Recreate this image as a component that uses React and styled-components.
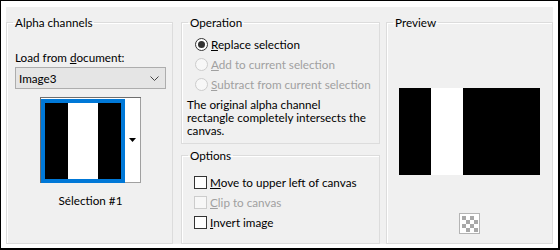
import React from "react";
import styled, { createGlobalStyle } from "styled-components";

const Global = createGlobalStyle`
  html, body { margin: 0; padding: 0; background: #ffffff; }
  body { font-family: "Segoe UI", Lato, "Liberation Sans", sans-serif; font-size: 11.7px; color: #000; }
  * { box-sizing: border-box; }
`;

const Frame = styled.div`
  width: 560px;
  height: 250px;
  border-style: solid;
  border-color: #000;
  border-width: 1px 2px 2px 1px;
  padding: 6px 5px 4px 5px;
  background: #fff;
`;

const Panel = styled.div`
  height: 100%;
  background: #f0f0f0;
  padding-top: 7px;
  display: flex;
`;

const Column = styled.div`
  width: ${(p) => p.$w}px;
  flex: none;
  display: flex;
  flex-direction: column;
  gap: 3px;
  margin-left: ${(p) => p.$ml || 0}px;
`;

const Group = styled.fieldset`
  margin: 0;
  padding: 0;
  min-width: 0;
  border: 1px solid #dcdcdc;
  box-shadow: inset 1px 1px 0 #fff;
  flex: ${(p) => (p.$grow ? 1 : "none")};
  height: ${(p) => (p.$h ? `${p.$h}px` : "auto")};
  display: flex;
  flex-direction: column;
`;

const Legend = styled.legend`
  margin-left: 6px;
  padding: 0 2px;
  line-height: 16px;
  height: 16px;
`;

const Body = styled.div`
  display: flex;
  flex-direction: column;
  padding: ${(p) => p.$pad || "0"};
  align-items: ${(p) => p.$align || "stretch"};
`;

const Indent = styled.div`
  padding-left: ${(p) => p.$pl}px;
`;

const Label = styled.div`
  line-height: 16px;
  height: 16px;
`;

const Select = styled.div`
  height: 22px;
  border: 1px solid #adadad;
  background: #e5e5e5;
  display: flex;
  align-items: center;
  justify-content: space-between;
  padding: 0 6px 0 3px;
  margin-top: 2px;
  line-height: 16px;
`;

const ThumbWrap = styled.div`
  align-self: center;
  margin-top: 8px;
  width: 101px;
  height: 86px;
  display: flex;
  border-top: 1px solid #6e6e6e;
  border-left: 1px solid #6e6e6e;
  background: #fff;
`;

const ThumbSel = styled.div`
  width: 84px;
  height: 84px;
  margin-top: 1px;
  border: 4px solid #0078d7;
  background: #fff;
  display: flex;
`;

const DropBtn = styled.div`
  flex: 1;
  height: 85px;
  border-right: 1px solid #a0a0a0;
  border-bottom: 1px solid #a0a0a0;
  background: #fff;
  display: flex;
  align-items: center;
  justify-content: center;
`;

const Stripes = styled.div`
  width: ${(p) => p.$w}px;
  height: ${(p) => p.$h}px;
  flex: none;
  background: linear-gradient(
    to right,
    #000 0,
    #000 ${(p) => p.$a}px,
    #fff ${(p) => p.$a}px,
    #fff ${(p) => p.$b}px,
    #000 ${(p) => p.$b}px
  );
`;

const Caption = styled.div`
  align-self: center;
  margin-top: 9px;
  line-height: 16px;
`;

const OptionRow = styled.label`
  display: flex;
  align-items: center;
  height: ${(p) => p.$h || 20}px;
  gap: 3px;
  white-space: nowrap;
  color: ${(p) => (p.$disabled ? "#a0a0a0" : "#000")};
  line-height: 16px;
`;

const Radio = styled.span`
  width: 13px;
  height: 13px;
  flex: none;
  border-radius: 50%;
  border: 1px solid ${(p) => (p.$disabled ? "#cccccc" : "#333")};
  background: ${(p) => (p.$disabled ? "#f7f7f7" : "#fff")};
  display: flex;
  align-items: center;
  justify-content: center;
  &::after {
    content: "";
    width: 7px;
    height: 7px;
    border-radius: 50%;
    background: #333;
    display: ${(p) => (p.$checked ? "block" : "none")};
  }
`;

const Check = styled.span`
  width: 13px;
  height: 13px;
  flex: none;
  border: 1px solid ${(p) => (p.$disabled ? "#cccccc" : "#333")};
  background: ${(p) => (p.$disabled ? "#f7f7f7" : "#fff")};
`;

const Note = styled.p`
  margin: 4px 0 0 0;
  padding-left: 5px;
  line-height: 13px;
  width: 190px;
`;

const Checker = styled.div`
  width: 21px;
  height: 21px;
  border: 1px solid #b4b4b4;
  padding: 2px;
  background: #fff;
  display: grid;
  grid-template-columns: repeat(4, 4px);
  grid-template-rows: repeat(4, 4px);
  margin-top: 38px;
`;

const Cell = styled.span`
  background: ${(p) => (p.$dark ? "#a8a8a8" : "#fff")};
`;

function Chevron() {
  return (
    <svg width="9" height="5" viewBox="0 0 9 5">
      <polyline points="0.5,0.5 4.5,4.5 8.5,0.5" fill="none" stroke="#444" strokeWidth="1" />
    </svg>
  );
}

function Triangle() {
  return (
    <svg width="7" height="4" viewBox="0 0 7 4">
      <polygon points="0,0 7,0 3.5,4" fill="#000" />
    </svg>
  );
}

export default function App() {
  const cells = [];
  for (let r = 0; r < 4; r++) for (let c = 0; c < 4; c++) cells.push(<Cell key={r * 4 + c} $dark={(r + c) % 2 === 0} />);
  return (
    <>
      <Global />
      <Frame>
        <Panel>
          <Column $w={167}>
            <Group $grow>
              <Legend>Alpha channels</Legend>
              <Body $pad="19px 6px 0 8px">
                <Label>
                  Load from <u>d</u>ocument:
                </Label>
                <Select>
                  <span>Image3</span>
                  <Chevron />
                </Select>
                <ThumbWrap>
                  <ThumbSel>
                    <Stripes $w={76} $h={76} $a={23} $b={53} />
                  </ThumbSel>
                  <DropBtn>
                    <Triangle />
                  </DropBtn>
                </ThumbWrap>
                <Caption>Sélection #1</Caption>
              </Body>
            </Group>
          </Column>
          <Column $w={199} $ml={8}>
            <Group $h={130}>
              <Legend>Operation</Legend>
              <Body $pad="4px 0 0 0">
                <Indent $pl={13}>
                  <OptionRow>
                    <Radio $checked />
                    <span>
                      <u>R</u>eplace selection
                    </span>
                  </OptionRow>
                  <OptionRow $disabled>
                    <Radio $disabled />
                    <span>
                      <u>A</u>dd to current selection
                    </span>
                  </OptionRow>
                  <OptionRow $disabled>
                    <Radio $disabled />
                    <span>
                      <u>S</u>ubtract from current selection
                    </span>
                  </OptionRow>
                </Indent>
                <Note>
                  The original alpha channel
                  <br />
                  rectangle completely intersects the
                  <br />
                  canvas.
                </Note>
              </Body>
            </Group>
            <Group $grow>
              <Legend>Options</Legend>
              <Body $pad="9px 0 0 12px">
                <OptionRow>
                  <Check />
                  <span>
                    <u>M</u>ove to upper left of canvas
                  </span>
                </OptionRow>
                <OptionRow $disabled>
                  <Check $disabled />
                  <span>
                    <u>C</u>lip to canvas
                  </span>
                </OptionRow>
                <OptionRow>
                  <Check />
                  <span>
                    <u>I</u>nvert image
                  </span>
                </OptionRow>
              </Body>
            </Group>
          </Column>
          <Column $w={167} $ml={6}>
            <Group $grow>
              <Legend>Preview</Legend>
              <Body $pad="58px 0 0 0" $align="center">
                <Stripes $w={141} $h={87} $a={32} $b={64} />
                <Checker>{cells}</Checker>
              </Body>
            </Group>
          </Column>
        </Panel>
      </Frame>
    </>
  );
}
